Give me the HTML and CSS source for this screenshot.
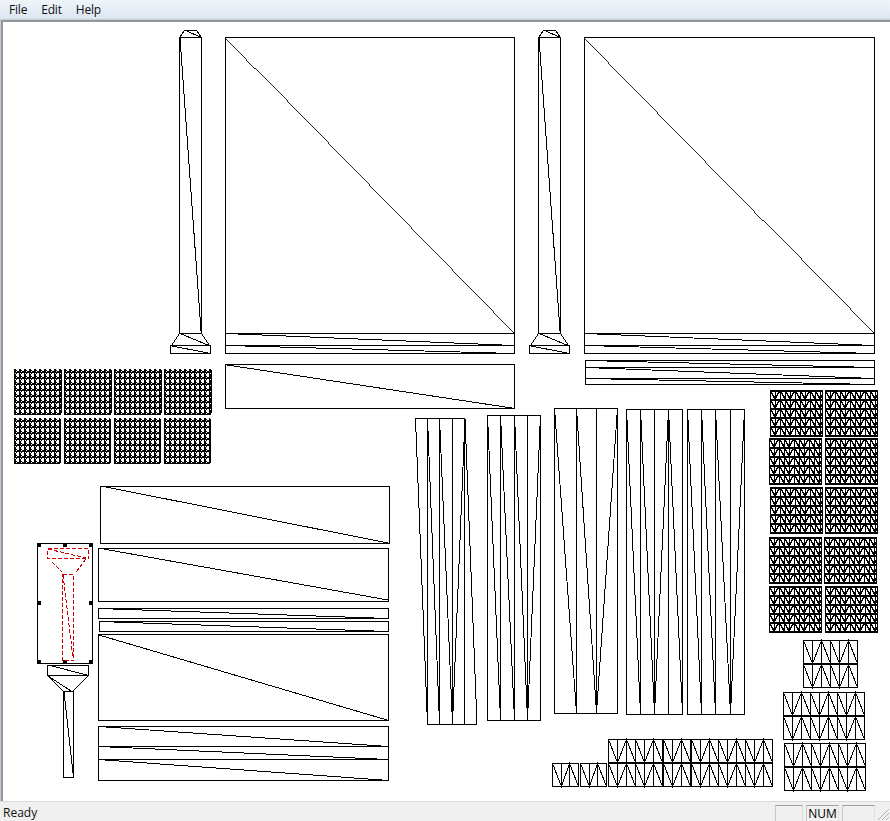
FILE: index.html
```html
<!DOCTYPE html>
<html lang="en">
<head>
<meta charset="utf-8">
<title>UV layout</title>
<link rel="stylesheet" href="styles.css">
</head>
<body>
<div class="app">
  <nav class="menubar">
    <span class="menu-item">File</span>
    <span class="menu-item">Edit</span>
    <span class="menu-item">Help</span>
  </nav>
  <main class="canvas">
    <div class="well">
    <svg class="drawing" width="887" height="779" viewBox="3 22 887 779" xmlns="http://www.w3.org/2000/svg">
      <defs>
        <pattern id="mesh-a" x="0" y="0" width="5" height="6" patternUnits="userSpaceOnUse">
          <path d="M.5 0V6M0 3.5H5M1.5 0V3M0 0L5 3M5 3L0 6"/>
        </pattern>
        <pattern id="mesh-b" x="0" y="0" width="15" height="9" patternUnits="userSpaceOnUse">
          <path d="M.5 0V9M5.5 0V9M10.5 0V9M0 .5H15M0 1.5H15"/>
          <path class="mesh-heavy" d="M0 0L5 9L10 0L15 9"/>
        </pattern>
        <g id="tall">
          <path d="M179.5 37.5H201.5V333.5H179.5Z"/>
          <path d="M179.5 37.5L184.5 30.5H196.5L201.5 37.5M186 30.5L201 37.5"/>
          <path d="M180 38L201 331"/>
          <path d="M179.5 333.5L171.5 345.5M201.5 333.5L209.5 345.5M180 333.5L209 345.5"/>
          <path d="M170.5 345.5H210.5V353.5H170.5Z"/>
          <path d="M172 346L208 353"/>
        </g>
        <g id="blob-a">
          <path class="mesh-a" d="M0 0H46L48 2V44L46 46H0Z"/>
          <path d="M47.5 2V44"/>
        </g>
        <g id="blob-b">
          <path class="mesh-a" d="M0 0H45L47 2V44L45 46H0Z"/>
          <path d="M46.5 2V44"/>
        </g>
        <rect id="block" class="mesh-b" x=".5" y=".5" width="52" height="46"/>
        <path id="vbox" d="M.5 .5H27.5V23.5H.5ZM9.5 .5V23.5M18.5 .5V23.5M.5 .5L9.5 23.5L18.5 .5L27.5 23.5"/>
        <path id="vbox-small" d="M.5 .5H26.5V23.5H.5ZM9.5 .5V23.5M17.5 .5V23.5M.5 .5L9.5 23.5L17.5 .5L26.5 23.5"/>
      </defs>

      <use href="#tall"/>
      <use href="#tall" x="359"/>

      <path d="M225.5 37.5H514.5V353.5H225.5ZM225.5 333.5H514.5M225.5 345.5H514.5"/>
      <path class="diagonal" d="M225.5 37.5L514.5 333.5"/>
      <path d="M238 334L502 345M244 346L496 353"/>
      <path d="M225.5 364.5H514.5V408.5H225.5ZM227 365L512 408"/>

      <path d="M584.5 37.5H874.5V353.5H584.5ZM584.5 333.5H874.5M584.5 345.5H874.5"/>
      <path class="diagonal" d="M584.5 37.5L874.5 333.5"/>
      <path d="M597 334L862 345M603 346L856 353"/>
      <path d="M585.5 360.5H874.5V384.5H585.5ZM585.5 367.5H874.5M585.5 378.5H874.5"/>
      <path d="M606 361L854 367M599 368L861 378M610 379L850 384"/>

      <use href="#blob-a" x="14" y="369"/>
      <use href="#blob-a" x="64" y="369"/>
      <use href="#blob-a" x="114" y="369"/>
      <use href="#blob-a" x="164" y="369"/>
      <use href="#blob-b" x="14" y="418"/>
      <use href="#blob-b" x="64" y="418"/>
      <use href="#blob-b" x="114" y="418"/>
      <use href="#blob-b" x="164" y="418"/>

      <use href="#block" x="770" y="390"/>
      <use href="#block" x="825" y="390"/>
      <use href="#block" x="769" y="438"/>
      <use href="#block" x="825" y="438"/>
      <use href="#block" x="770" y="487"/>
      <use href="#block" x="825" y="487"/>
      <use href="#block" x="769" y="537"/>
      <use href="#block" x="824" y="537"/>
      <use href="#block" x="769" y="586"/>
      <use href="#block" x="825" y="586"/>

      <path d="M100.5 486.5H389.5V543.5H100.5ZM101 486L388 543"/>
      <path d="M98.5 548.5H388.5V601.5H98.5ZM98 548L388 600"/>
      <path d="M98.5 608.5H388.5V618.5H98.5ZM113 609L374 618"/>
      <path d="M99.5 621.5H388.5V631.5H99.5ZM114 622L374 631"/>
      <path d="M98.5 634.5H388.5V720.5H98.5ZM99 635L387 720"/>
      <path d="M98.5 726.5H388.5V780.5H98.5ZM98.5 746.5H388.5M98.5 759.5H388.5M106 727L381 746M110 747L377 759M105 760L382 780"/>

      <path d="M37.5 543.5H92.5V663.5H37.5Z"/>
      <g class="handles">
        <rect x="37" y="543" width="4" height="4"/>
        <rect x="63" y="543" width="4" height="4"/>
        <rect x="89" y="543" width="4" height="4"/>
        <rect x="37" y="601" width="4" height="4"/>
        <rect x="89" y="601" width="4" height="4"/>
        <rect x="37" y="660" width="4" height="4"/>
        <rect x="63" y="660" width="4" height="4"/>
        <rect x="89" y="660" width="4" height="4"/>
      </g>
      <path class="marquee" d="M47.5 548.5H88.5V558.5H47.5ZM48 549L86 558M52 562L62 572M86 559L76 572M62.5 574.5H73.5V660.5H62.5ZM63 575L73 658"/>

      <path d="M47.5 665.5H88.5V675.5H47.5ZM48 665L87 675"/>
      <path d="M48 676L63 691M88 676L73 691M48 676L71 691"/>
      <path d="M63.5 691.5H73.5V777.5H63.5ZM64 692L73 773"/>

      <path d="M415.5 418.5H465L477 724.5H427.5ZM427.5 418.5V724.5M439.5 418.5V724.5M452.5 418.5V724.5M464.5 418.5V724.5"/>
      <path d="M427.5 418L439.5 724M439.5 418L452.5 724M465 418L452.5 724"/>

      <path d="M487.5 415.5H540.5V720.5H487.5ZM500.5 415.5V720.5M514.5 415.5V720.5M527.5 415.5V720.5"/>
      <path d="M487.5 415L500.5 720M500.5 415L514.5 720M514.5 415L527.5 720M540.5 415L527.5 720"/>

      <path d="M554.5 408.5H617.5V713.5H554.5ZM576.5 408.5V713.5M596.5 408.5V713.5"/>
      <path d="M554.5 408L576.5 713M576.5 408L596.5 713M617.5 408L596.5 713"/>

      <path d="M626.5 409.5H682.5V714.5H626.5ZM640.5 409.5V714.5M654.5 409.5V714.5M668.5 409.5V714.5"/>
      <path d="M626.5 409L640.5 714M640.5 409L654.5 714M668.5 409L654.5 714M668.5 409L682.5 714"/>

      <path d="M687.5 409.5H744.5V714.5H687.5ZM701.5 409.5V714.5M715.5 409.5V714.5M730.5 409.5V714.5"/>
      <path d="M687.5 409L701.5 714M701.5 409L715.5 714M715.5 409L730.5 714M744.5 409L730.5 714"/>

      <use href="#vbox-small" x="552" y="763"/>
      <use href="#vbox-small" x="580" y="763"/>
      <use href="#vbox" x="608" y="739"/>
      <use href="#vbox" x="635" y="739"/>
      <use href="#vbox" x="663" y="739"/>
      <use href="#vbox" x="691" y="739"/>
      <use href="#vbox" x="718" y="739"/>
      <use href="#vbox" x="745" y="739"/>
      <use href="#vbox" x="608" y="763"/>
      <use href="#vbox" x="635" y="763"/>
      <use href="#vbox" x="663" y="763"/>
      <use href="#vbox" x="691" y="763"/>
      <use href="#vbox" x="718" y="763"/>
      <use href="#vbox" x="745" y="763"/>

      <use href="#vbox" x="803" y="640"/>
      <use href="#vbox" x="830" y="640"/>
      <use href="#vbox" x="803" y="664"/>
      <use href="#vbox" x="830" y="664"/>

      <use href="#vbox" x="783" y="692"/>
      <use href="#vbox" x="810" y="692"/>
      <use href="#vbox" x="837" y="692"/>
      <use href="#vbox" x="783" y="716"/>
      <use href="#vbox" x="810" y="716"/>
      <use href="#vbox" x="837" y="716"/>

      <use href="#vbox" x="784" y="743"/>
      <use href="#vbox" x="811" y="743"/>
      <use href="#vbox" x="838" y="743"/>
      <use href="#vbox" x="784" y="767"/>
      <use href="#vbox" x="811" y="767"/>
      <use href="#vbox" x="838" y="767"/>
    </svg>
    </div>
  </main>
  <footer class="statusbar">
    <span class="status-text">Ready</span>
    <span class="panel panel-a"></span>
    <span class="panel panel-b">NUM</span>
    <span class="panel panel-c"></span>
    <svg class="grip" width="16" height="16" viewBox="0 0 16 16" xmlns="http://www.w3.org/2000/svg">
      <path d="M15 4L4 15M15 8L8 15M15 12L12 15"/>
    </svg>
  </footer>
</div>
</body>
</html>
```

FILE: styles.css
```css
html, body {
  margin: 0;
  padding: 0;
  background: #ffffff;
}

.app {
  width: 890px;
  height: 821px;
  display: flex;
  flex-direction: column;
  overflow: hidden;
  font-family: "Open Sans", "Noto Sans", sans-serif;
  font-size: 12px;
  color: #000000;
}

.menubar {
  height: 19px;
  flex: none;
  display: flex;
  align-items: center;
  padding-left: 2px;
  box-sizing: border-box;
  background: linear-gradient(#f1f5fa, #dbe5f1);
}

.menu-item {
  padding: 0 7px;
  line-height: 19px;
  letter-spacing: -0.2px;
  color: #111111;
}

.canvas {
  flex: 1;
  min-height: 0;
  display: flex;
  background: #ffffff;
  border-top: 1px solid #c6ccd3;
  border-left: 1px solid #c6ccd3;
}

.well {
  flex: 1;
  min-width: 0;
  border-top: 2px solid #92979d;
  border-left: 2px solid #92979d;
}

.drawing {
  display: block;
  fill: none;
  stroke: #000000;
  stroke-width: 1;
  shape-rendering: crispEdges;
}

.diagonal {
  stroke-width: 0.85;
}

.mesh-a {
  fill: url(#mesh-a);
  stroke: none;
}

.mesh-b {
  fill: url(#mesh-b);
}

.mesh-heavy {
  stroke-width: 1.6;
}

.handles {
  fill: #000000;
  stroke: none;
}

.marquee {
  stroke: #cc0000;
  stroke-dasharray: 4 2;
}

.statusbar {
  height: 20px;
  flex: none;
  position: relative;
  display: flex;
  align-items: flex-end;
  box-sizing: border-box;
  padding-left: 3px;
  background: #f0f0f0;
  border-top: 1px solid #dadada;
}

.status-text {
  line-height: 16px;
  width: 772px;
  flex: none;
  color: #111111;
}

.panel {
  height: 16px;
  flex: none;
  box-sizing: border-box;
  border-top: 1px solid #a0a0a0;
  border-left: 1px solid #c8c8c8;
  border-right: 1px solid #e0e0e0;
  line-height: 16px;
  text-align: center;
}

.panel-a {
  width: 28px;
}

.panel-b {
  width: 33px;
  margin-left: 3px;
}

.panel-c {
  width: 33px;
  margin-left: 3px;
}

.grip {
  position: absolute;
  right: 0;
  bottom: 0;
  fill: none;
  stroke: #b0b0b0;
  stroke-width: 1;
}
```
